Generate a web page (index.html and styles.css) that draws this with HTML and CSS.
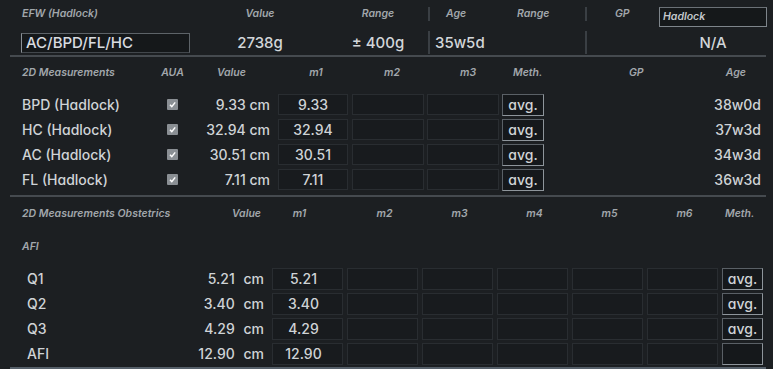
FILE: index.html
```html
<!DOCTYPE html>
<html>
<head>
<meta charset="utf-8">
<link rel="stylesheet" href="styles.css">
</head>
<body>
<div class="screen">
  <section class="efw">
    <div class="hd efw-label">EFW (Hadlock)</div>
    <div class="hd ctr">Value</div>
    <div class="hd ctr rng">Range</div>
    <div class="hd sep age-h">Age</div>
    <div class="hd rng2">Range</div>
    <div class="hd sep gp-h">GP</div>
    <div class="gp-sel"><span class="sel-box">Hadlock</span></div>

    <div class="formula"><span class="in-box">AC/BPD/FL/HC</span></div>
    <div class="big ctr">2738g</div>
    <div class="big ctr rng">± 400g</div>
    <div class="big sep age-v">35w5d</div>
    <div class="big"></div>
    <div class="big sep"></div>
    <div class="big ctr">N/A</div>
  </section>
  <div class="rule"></div>

  <section class="m2d">
    <div class="hd hrow c-label">2D Measurements</div>
    <div class="hd hrow ctr">AUA</div>
    <div class="hd hrow c-value">Value</div>
    <div class="hd hrow ctr h-m1">m1</div>
    <div class="hd hrow ctr h-m2">m2</div>
    <div class="hd hrow ctr h-m3">m3</div>
    <div class="hd hrow c-meth">Meth.</div>
    <div class="hd hrow c-gp">GP</div>
    <div class="hd hrow c-age">Age</div>

    <div class="txt c-label">BPD (Hadlock)</div>
    <div class="chk-cell"><span class="chk"><svg viewBox="0 0 11 11" width="11" height="11"><path d="M3 5.8 L4.8 7.6 L8.2 3.4" fill="none" stroke="#fff" stroke-width="1.5"/></svg></span></div>
    <div class="txt val">9.33 cm</div>
    <div class="cell m1"><span class="box">9.33</span></div>
    <div class="cell m2"><span class="box"></span></div>
    <div class="cell m3"><span class="box"></span></div>
    <div class="cell mt"><span class="btn">avg.</span></div>
    <div class="txt"></div>
    <div class="txt r-age">38w0d</div>

    <div class="txt c-label">HC (Hadlock)</div>
    <div class="chk-cell"><span class="chk"><svg viewBox="0 0 11 11" width="11" height="11"><path d="M3 5.8 L4.8 7.6 L8.2 3.4" fill="none" stroke="#fff" stroke-width="1.5"/></svg></span></div>
    <div class="txt val">32.94 cm</div>
    <div class="cell m1"><span class="box">32.94</span></div>
    <div class="cell m2"><span class="box"></span></div>
    <div class="cell m3"><span class="box"></span></div>
    <div class="cell mt"><span class="btn">avg.</span></div>
    <div class="txt"></div>
    <div class="txt r-age">37w3d</div>

    <div class="txt c-label">AC (Hadlock)</div>
    <div class="chk-cell"><span class="chk"><svg viewBox="0 0 11 11" width="11" height="11"><path d="M3 5.8 L4.8 7.6 L8.2 3.4" fill="none" stroke="#fff" stroke-width="1.5"/></svg></span></div>
    <div class="txt val">30.51 cm</div>
    <div class="cell m1"><span class="box">30.51</span></div>
    <div class="cell m2"><span class="box"></span></div>
    <div class="cell m3"><span class="box"></span></div>
    <div class="cell mt"><span class="btn">avg.</span></div>
    <div class="txt"></div>
    <div class="txt r-age">34w3d</div>

    <div class="txt c-label">FL (Hadlock)</div>
    <div class="chk-cell"><span class="chk"><svg viewBox="0 0 11 11" width="11" height="11"><path d="M3 5.8 L4.8 7.6 L8.2 3.4" fill="none" stroke="#fff" stroke-width="1.5"/></svg></span></div>
    <div class="txt val">7.11 cm</div>
    <div class="cell m1"><span class="box">7.11</span></div>
    <div class="cell m2"><span class="box"></span></div>
    <div class="cell m3"><span class="box"></span></div>
    <div class="cell mt"><span class="btn">avg.</span></div>
    <div class="txt"></div>
    <div class="txt r-age">36w3d</div>
  </section>
  <div class="rule r2"></div>

  <section class="obs">
    <div class="hd ohrow o-label">2D Measurements Obstetrics</div>
    <div class="hd ohrow o-valh">Value</div>
    <div class="hd ohrow ctr o-m1h">m1</div>
    <div class="hd ohrow ctr o-mh">m2</div>
    <div class="hd ohrow ctr o-mh">m3</div>
    <div class="hd ohrow ctr o-mh">m4</div>
    <div class="hd ohrow ctr o-mh">m5</div>
    <div class="hd ohrow ctr o-mh">m6</div>
    <div class="hd ohrow o-meth">Meth.</div>

    <div class="hd afi-lbl">AFI</div>

    <div class="txt o-name">Q1</div>
    <div class="txt o-val">5.21 cm</div>
    <div class="cell"><span class="box obox o1">5.21</span></div>
    <div class="cell"><span class="box obox"></span></div>
    <div class="cell"><span class="box obox"></span></div>
    <div class="cell"><span class="box obox"></span></div>
    <div class="cell"><span class="box obox"></span></div>
    <div class="cell"><span class="box obox"></span></div>
    <div class="cell"><span class="btn obtn">avg.</span></div>

    <div class="txt o-name">Q2</div>
    <div class="txt o-val">3.40 cm</div>
    <div class="cell"><span class="box obox o1">3.40</span></div>
    <div class="cell"><span class="box obox"></span></div>
    <div class="cell"><span class="box obox"></span></div>
    <div class="cell"><span class="box obox"></span></div>
    <div class="cell"><span class="box obox"></span></div>
    <div class="cell"><span class="box obox"></span></div>
    <div class="cell"><span class="btn obtn">avg.</span></div>

    <div class="txt o-name">Q3</div>
    <div class="txt o-val">4.29 cm</div>
    <div class="cell"><span class="box obox o1">4.29</span></div>
    <div class="cell"><span class="box obox"></span></div>
    <div class="cell"><span class="box obox"></span></div>
    <div class="cell"><span class="box obox"></span></div>
    <div class="cell"><span class="box obox"></span></div>
    <div class="cell"><span class="box obox"></span></div>
    <div class="cell"><span class="btn obtn">avg.</span></div>

    <div class="txt o-name">AFI</div>
    <div class="txt o-val">12.90 cm</div>
    <div class="cell"><span class="box obox o1">12.90</span></div>
    <div class="cell"><span class="box obox"></span></div>
    <div class="cell"><span class="box obox"></span></div>
    <div class="cell"><span class="box obox"></span></div>
    <div class="cell"><span class="box obox"></span></div>
    <div class="cell"><span class="box obox"></span></div>
    <div class="cell"><span class="btn obtn"></span></div>
  </section>
  <div class="rule r3"></div>
</div>
</body>
</html>
```
FILE: styles.css
```css
html, body {
  margin: 0;
  padding: 0;
  background: #1c1f22;
}
.screen {
  width: 773px;
  height: 369px;
  overflow: hidden;
  background: #1c1f22;
  color: #cfd3d6;
  font-family: Inter, "Open Sans", "DejaVu Sans", sans-serif;
  font-feature-settings: "cv11";
}
.hd {
  font-style: italic;
  font-size: 10.5px;
  font-weight: 600;
  color: #a2a7ac;
  line-height: 14px;
  white-space: nowrap;
}
.ctr { text-align: center; }

/* ---- EFW header ---- */
.efw {
  display: grid;
  grid-template-columns: 210px 100px 118px 72px 85px 74px 108px;
  grid-template-rows: 23px 23px;
  row-gap: 3px;
  padding-top: 5px;
}
.efw > .hd { align-self: start; margin-top: 2px; }
.efw-label { padding-left: 22px; }
.rng { padding-left: 18px; }
.sep { border-left: 2px solid #3a3f44; }
.age-h { padding-left: 16px; }
.rng2 { padding-left: 17px; }
.gp-h { padding-left: 28px; }
.gp-sel { display: flex; align-items: start; margin-top: 2px; }
.sel-box {
  box-sizing: border-box;
  width: 108px;
  height: 20px;
  border: 1px solid #7e858b;
  border-top-color: #6b7177;
  background: #15181a;
  font-style: italic;
  font-size: 10.5px;
  font-weight: 600;
  color: #c4c8cc;
  padding: 2px 3px;
  line-height: 14px;
}
.big {
  font-size: 15px;
  line-height: 23px;
  font-weight: 500;
  color: #d2d6d9;
  white-space: nowrap;
}
.age-v { padding-left: 5px; }
.formula { display: flex; align-items: center; padding-left: 21px; }
.in-box {
  box-sizing: border-box;
  width: 169px;
  height: 20px;
  border: 1px solid #5d6368;
  border-left-color: #8a9096;
  border-bottom-color: #42474c;
  background: #15181a;
  font-size: 15px;
  line-height: 18px;
  padding-left: 4px;
  color: #d9dce0;
  font-weight: 500;
}
.rule {
  height: 2px;
  background: #454a4f;
  margin: 1px 7px 0 10px;
}

/* ---- 2D Measurements ---- */
.m2d {
  display: grid;
  grid-template-columns: 150px 45px 81px 74px 76px 74px 46px 134px 87px;
  grid-auto-rows: 25px;
  grid-template-rows: 35px;
}
.hrow { padding-top: 9px; }
.c-label { padding-left: 22px; }
.c-value { padding-left: 22px; }
.h-m1 { padding-left: 6px; }
.h-m2 { padding-left: 8px; }
.h-m3 { padding-left: 10px; }
.c-meth { padding-left: 13px; }
.c-gp { padding-left: 83px; }
.c-age { text-align: right; padding-right: 21px; }
.txt {
  font-size: 14px;
  font-weight: 500;
  line-height: 25px;
  white-space: nowrap;
  color: #cfd3d6;
}
.val { text-align: right; padding-right: 6px; }
.r-age { text-align: right; padding-right: 6px; }
.chk-cell { display: flex; align-items: center; justify-content: center; }
.chk {
  width: 11px;
  height: 11px;
  background: #8a8f94;
  border-radius: 1px;
  display: block;
}
.chk svg { display: block; }
.cell { display: flex; align-items: flex-start; padding-top: 2px; }
.box {
  box-sizing: border-box;
  height: 21px;
  border: 1px solid #292d31;
  background: #181b1e;
  font-size: 14px;
  font-weight: 500;
  line-height: 19px;
  text-align: center;
  color: #cfd3d6;
}
.m1 .box { width: 70px; margin-left: 2px; }
.m2 .box { width: 72px; margin-left: 2px; }
.m3 .box { width: 72px; margin-left: 1px; }
.mt .btn { margin-left: 2px; }
.btn {
  box-sizing: border-box;
  width: 42px;
  height: 22px;
  border: 1px solid #5a6066;
  border-right-color: #8e959b;
  border-bottom-color: #8e959b;
  background: #15181b;
  font-size: 14px;
  font-weight: 500;
  line-height: 19px;
  text-align: center;
  color: #d0d4d7;
}
.r2 { margin-top: 3px; }

/* ---- Obstetrics ---- */
.obs {
  display: grid;
  grid-template-columns: 180px 90px 75px 75px 75px 75px 75px 75px 45px;
  grid-template-rows: 31px 38px;
  grid-auto-rows: 25px;
}
.ohrow { padding-top: 10px; }
.o-label { padding-left: 22px; }
.o-valh { text-align: right; padding-right: 9px; }
.o-m1h { padding-right: 16px; }
.o-mh { padding-left: 4px; }
.o-meth { padding-left: 5px; }
.afi-lbl {
  grid-column: 1 / -1;
  padding-left: 22px;
  padding-top: 12px;
}
.o-name { padding-left: 27px; }
.o-val { text-align: right; padding-right: 6px; word-spacing: 5px; }
.obox { width: 71px; margin-left: 2px; height: 22px; line-height: 20px; }
.o1 { padding-right: 8px; }
.obtn { width: 41px; margin-left: 2px; }
.r3 { margin-top: 1px; background: #56606a; }
```
